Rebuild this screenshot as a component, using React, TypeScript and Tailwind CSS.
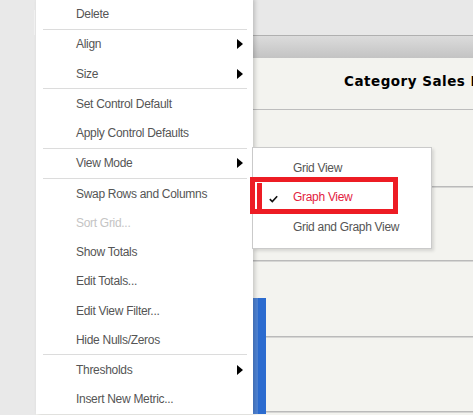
import React from 'react';

type Item = { label: string; sub?: boolean; disabled?: boolean } | 'sep';

const items: Item[] = [
  { label: 'Delete' },
  'sep',
  { label: 'Align', sub: true },
  { label: 'Size', sub: true },
  'sep',
  { label: 'Set Control Default' },
  { label: 'Apply Control Defaults' },
  'sep',
  { label: 'View Mode', sub: true },
  'sep',
  { label: 'Swap Rows and Columns' },
  { label: 'Sort Grid...', disabled: true },
  { label: 'Show Totals' },
  { label: 'Edit Totals...' },
  { label: 'Edit View Filter...' },
  { label: 'Hide Nulls/Zeros' },
  'sep',
  { label: 'Thresholds', sub: true },
  { label: 'Insert New Metric...' },
];

const SubArrow = () => (
  <svg width="6" height="10" viewBox="0 0 6 10" className="shrink-0">
    <polygon points="0,0 6,5 0,10" fill="#000" />
  </svg>
);

const Check = () => (
  <svg width="9" height="8" viewBox="0 0 9 8" className="absolute left-[16px] top-[12px]">
    <path d="M0.8 4.2 L3.3 6.6 L8.2 1.2" fill="none" stroke="#111" strokeWidth="1.6" />
  </svg>
);

const ContextMenu = () => (
  <div className="absolute left-[36px] top-[-0.6px] w-[217px] bg-white shadow-[2px_0_4px_rgba(0,0,0,0.18)]">
    {items.map((it, i) =>
      it === 'sep' ? (
        <div key={i} className="h-px ml-[7px] mr-[6px] bg-[#dcdcdc]" />
      ) : (
        <div
          key={i}
          className={`h-[29.25px] flex items-center justify-between pl-[40px] pr-[10px] text-[12px] tracking-[-0.3px] ${
            it.disabled ? 'text-[#c4c4c4]' : 'text-[#555555]'
          }`}
        >
          <span>{it.label}</span>
          {it.sub && <SubArrow />}
        </div>
      )
    )}
  </div>
);

const ViewModeMenu = () => (
  <div className="absolute left-[252px] top-[147px] w-[180px] h-[102px] bg-white border border-[#cacaca] shadow-[2px_2px_3px_rgba(0,0,0,0.12)] pt-[5.5px] text-[12px] tracking-[-0.3px]">
    <div className="h-[29.25px] flex items-center pl-[40px] text-[#555555]">Grid View</div>
    <div className="relative h-[29.25px] flex items-center pl-[40px] text-[#e3223f]">
      <div className="absolute left-[4px] top-0 bottom-[3px] w-[5px] bg-[#ed1c24]" />
      <Check />
      Graph View
    </div>
    <div className="h-[29.25px] flex items-center pl-[40px] text-[#555555]">Grid and Graph View</div>
  </div>
);

// gridlines and the first bar of the report chart
const Chart = () => (
  <svg width="437" height="304" viewBox="0 0 437 304" className="block">
    <rect width="437" height="304" fill="#f3f3ef" />
    {[76, 150, 226, 301].map((y) => (
      <rect key={y} x="0" y={y} width="437" height="1.5" fill="#bababa" />
    ))}
    <rect x="200" y="188" width="30" height="116" fill="#2b6bcf" />
    <rect x="217" y="188" width="5" height="116" fill="#4d82d4" />
  </svg>
);

export default function App() {
  return (
    <div className="relative w-[473px] h-[415px] overflow-hidden flex font-['Liberation_Sans',Arial,sans-serif]">
      <div className="w-[36px] bg-[#e9e9e9]">
        <div className="ml-[34px] mt-[10px] w-px h-[25px] bg-[#f3f3f3]" />
      </div>
      <div className="flex-1 min-w-0 flex flex-col bg-[#f3f3ef]">
        <div className="h-[36px] bg-[#e8e8e8] border-b border-[#b0b0b0]" />
        <div className="h-[22px] bg-gradient-to-b from-[#dcdcdc] to-[#c3c3c3]" />
        <div className="h-[52px] border-b border-[#bdbdbd] pl-[308px] pt-[13px] text-[13.5px] font-bold tracking-[0.5px] text-black whitespace-nowrap overflow-hidden font-['DejaVu_Sans',sans-serif]">
          Category Sales Report
        </div>
        <Chart />
      </div>
      <ContextMenu />
      <ViewModeMenu />
      <div className="absolute left-[250px] top-[177px] w-[148px] h-[37px] border-[5px] border-[#ed1c24]" />
    </div>
  );
}
